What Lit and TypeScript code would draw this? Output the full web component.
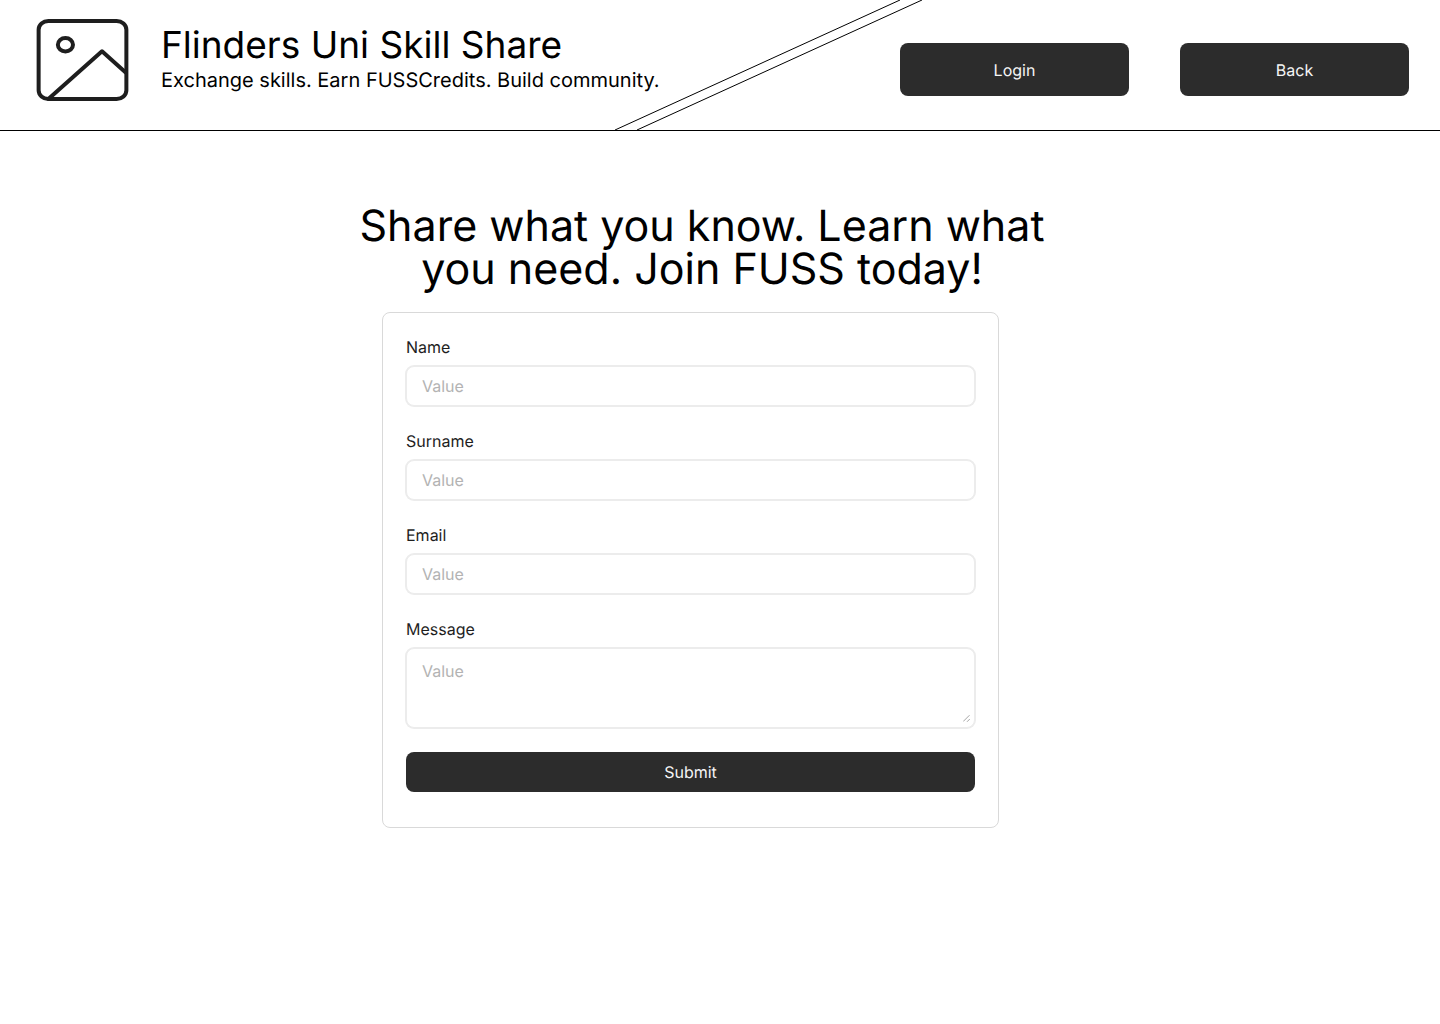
import { LitElement, html, css } from "lit";
import { customElement, property } from "lit/decorators.js";

@customElement("site-header")
export class SiteHeader extends LitElement {
  static styles = css`
    :host {
      display: block;
    }
    .bar {
      position: relative;
      display: flex;
      align-items: flex-start;
      justify-content: space-between;
      min-height: 130px;
      border-bottom: 1px solid #000;
      overflow: hidden;
    }
    .brand {
      display: flex;
      align-items: flex-start;
      gap: 20px;
      padding: 8px 0 0 24px;
    }
    .logo {
      flex: none;
      width: 117px;
      height: 104px;
      fill: none;
      stroke: #1e1e1e;
      stroke-width: 4;
      stroke-linecap: round;
      stroke-linejoin: round;
    }
    .logo * {
      vector-effect: non-scaling-stroke;
    }
    .words {
      padding-top: 14px;
    }
    .title {
      margin: 0;
      font-size: 37px;
      line-height: 46px;
      font-weight: 400;
    }
    .tagline {
      margin: 0;
      font-size: 20px;
      line-height: 24px;
    }
    .slash {
      position: absolute;
      top: 0;
      left: 600px;
      width: 340px;
      height: 130px;
      stroke: #000;
      stroke-width: 1;
      pointer-events: none;
    }
    .actions {
      position: relative;
      display: flex;
      gap: 51px;
      padding: 43px 31px 0 0;
    }
    .button {
      width: 229px;
      height: 53px;
      padding: 0;
      border: 0;
      border-radius: 8px;
      background: #2c2c2c;
      color: #f5f5f5;
      font: inherit;
      text-rendering: inherit;
      cursor: pointer;
    }
  `;

  render() {
    return html`
      <header class="bar">
        <svg class="slash" viewBox="0 0 340 130" aria-hidden="true">
          <line x1="15" y1="130" x2="300" y2="0"></line>
          <line x1="37" y1="130" x2="322" y2="0"></line>
        </svg>
        <div class="brand">
          <svg class="logo" viewBox="0 0 24 24" preserveAspectRatio="none" aria-hidden="true">
            <rect x="3" y="3" width="18" height="18" rx="2" ry="2"></rect>
            <circle cx="8.5" cy="8.5" r="1.55"></circle>
            <path d="M20.8 14.8 L16 10 L5 21"></path>
          </svg>
          <div class="words">
            <p class="title">Flinders Uni Skill Share</p>
            <p class="tagline">Exchange skills. Earn FUSSCredits. Build community.</p>
          </div>
        </div>
        <nav class="actions">
          <button class="button" type="button">Login</button>
          <button class="button" type="button">Back</button>
        </nav>
      </header>
    `;
  }
}

@customElement("form-field")
export class FormField extends LitElement {
  @property() label = "";
  @property() type = "text";
  @property({ type: Boolean }) multiline = false;

  static styles = css`
    :host {
      display: flex;
      flex-direction: column;
      gap: 8px;
    }
    .label {
      color: #1e1e1e;
      line-height: 22px;
    }
    .control {
      display: block;
      box-sizing: border-box;
      width: 100%;
      height: 40px;
      margin: 0;
      padding: 0 15px;
      border: 1px solid #ececec;
      border-radius: 8px;
      box-shadow: 0 0 0 1px #ececec;
      outline: 0;
      background: #fff;
      color: #1e1e1e;
      font: inherit;
      text-rendering: inherit;
    }
    .control:focus {
      border-color: #767676;
    }
    .control::placeholder {
      color: #b3b3b3;
      opacity: 1;
    }
    .area {
      position: relative;
    }
    .area .control {
      height: 80px;
      padding: 11px 15px;
      line-height: 22px;
      resize: none;
    }
    .grip {
      position: absolute;
      right: 5px;
      bottom: 6px;
      width: 7px;
      height: 7px;
      fill: none;
      stroke: #a6a6a6;
      pointer-events: none;
    }
  `;

  render() {
    return html`
      <label class="label" for="control">${this.label}</label>
      ${this.multiline
        ? html`<div class="area">
            <textarea id="control" class="control" placeholder="Value"></textarea>
            <svg class="grip" viewBox="0 0 7 7" aria-hidden="true">
              <path d="M6.5 0.2 L0.2 6.5 M6.8 4 L4 6.8"></path>
            </svg>
          </div>`
        : html`<input id="control" class="control" type=${this.type} placeholder="Value" />`}
    `;
  }
}

@customElement("app-root")
export class AppRoot extends LitElement {
  static styles = css`
    :host {
      display: block;
      min-height: 100vh;
      background: #fff;
      color: #000;
      font-family: Inter, "Liberation Sans", sans-serif;
      font-size: 16px;
      line-height: 22px;
      text-rendering: geometricPrecision;
    }
    .main {
      display: flex;
      flex-direction: column;
      align-items: center;
      padding: 74px 59px 40px 0;
    }
    .headline {
      max-width: 700px;
      margin: 0;
      padding-left: 23px;
      font-size: 43px;
      line-height: 43px;
      font-weight: 400;
      text-align: center;
    }
    .card {
      display: flex;
      flex-direction: column;
      gap: 24px;
      box-sizing: border-box;
      width: 100%;
      max-width: 617px;
      margin-top: 21px;
      padding: 23px 23px 35px;
      border: 1px solid #d9d9d9;
      border-radius: 8px;
    }
    .submit {
      height: 40px;
      padding: 0;
      border: 0;
      border-radius: 8px;
      background: #2c2c2c;
      color: #f5f5f5;
      font: inherit;
      text-rendering: inherit;
      cursor: pointer;
    }
  `;

  render() {
    return html`
      <site-header></site-header>
      <main class="main">
        <h1 class="headline">Share what you know. Learn what you need. Join FUSS today!</h1>
        <form class="card" @submit=${(e: Event) => e.preventDefault()}>
          <form-field label="Name"></form-field>
          <form-field label="Surname"></form-field>
          <form-field label="Email" type="email"></form-field>
          <form-field label="Message" multiline></form-field>
          <button class="submit" type="submit">Submit</button>
        </form>
      </main>
    `;
  }
}
